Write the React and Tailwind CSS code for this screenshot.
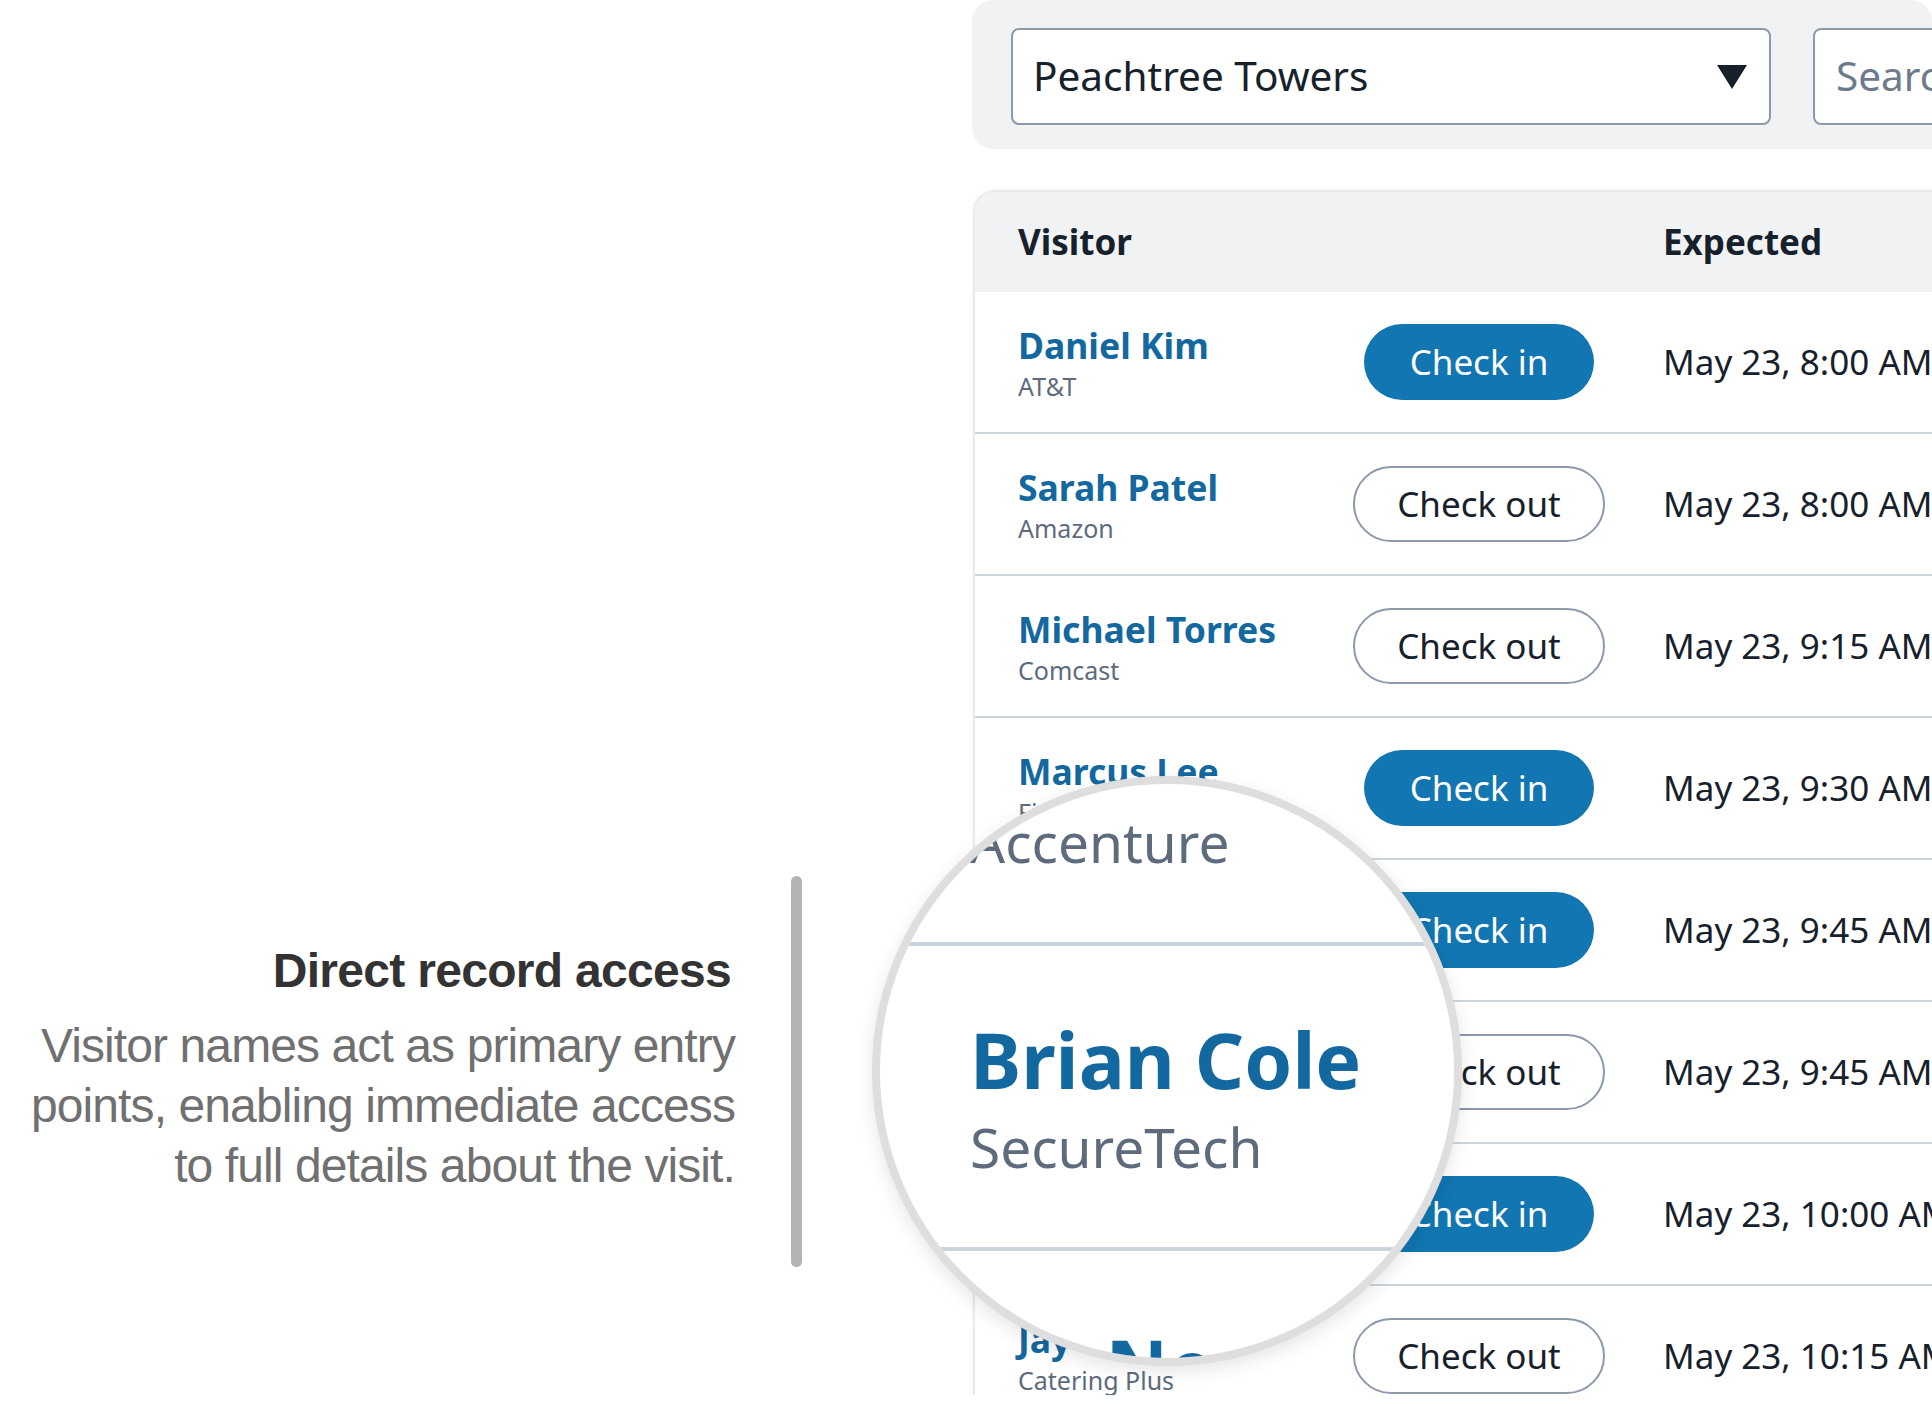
import React from "react";

const rows = [
  { name: "Daniel Kim", company: "AT&T", action: "in", time: "May 23, 8:00 AM" },
  { name: "Sarah Patel", company: "Amazon", action: "out", time: "May 23, 8:00 AM" },
  { name: "Michael Torres", company: "Comcast", action: "out", time: "May 23, 9:15 AM" },
  { name: "Marcus Lee", company: "Fidelity", action: "in", time: "May 23, 9:30 AM" },
  { name: "Olivia Chen", company: "Deloitte", action: "in", time: "May 23, 9:45 AM" },
  { name: "Priya Shah", company: "Accenture", action: "out", time: "May 23, 9:45 AM" },
  { name: "Brian Cole", company: "SecureTech", action: "in", time: "May 23, 10:00 AM" },
  { name: "Jay Novak", company: "Catering Plus", action: "out", time: "May 23, 10:15 AM" },
];

const noto = { fontFamily: '"Noto Sans", "Open Sans", sans-serif' };
const lib = { fontFamily: '"Liberation Sans", Arial, sans-serif' };

function ActionButton({ action }) {
  if (action === "in") {
    return (
      <div className="flex h-[76px] w-[230px] items-center justify-center rounded-full bg-[#1176b1] text-[35px] text-white">
        Check in
      </div>
    );
  }
  return (
    <div className="flex h-[76px] w-[252px] items-center justify-center rounded-full border-2 border-[#8d9aab] bg-white text-[35px] text-[#17212b]">
      Check out
    </div>
  );
}

function Row({ r }) {
  return (
    <div className="flex h-[142px] shrink-0 items-center border-b-2 border-[#cdd5dd] pl-[43px]">
      <div className="w-[301px] shrink-0">
        <div className="whitespace-nowrap text-[35.5px] font-bold leading-[44px] text-[#13689f]">{r.name}</div>
        <div className="mt-[3px] whitespace-nowrap text-[25px] leading-[32px] text-[#5d6b7c]">{r.company}</div>
      </div>
      <div className="flex w-[320px] shrink-0 justify-center">
        <ActionButton action={r.action} />
      </div>
      <div className="ml-[24px] whitespace-nowrap text-[35px] text-[#17212b]">{r.time}</div>
    </div>
  );
}

function MagRow({ r, hideName, last }) {
  return (
    <div
      className={
        "flex h-[305px] flex-col justify-center pl-[110px] " +
        (last ? "" : "border-b-[4px] border-[#cbd3dc]")
      }
    >
      <div
        className={
          "whitespace-nowrap text-[77px] font-bold leading-[95px] text-[#13689f] " +
          (hideName ? "invisible" : "")
        }
      >
        {r.name}
      </div>
      <div className="mt-[5px] whitespace-nowrap text-[55px] leading-[69px] text-[#5d6b7c]">{r.company}</div>
    </div>
  );
}

export default function App() {
  return (
    <div className="relative flex h-[1404px] w-[1932px] overflow-hidden bg-white">
      {/* Left annotation */}
      <div className="flex w-[972px] shrink-0 items-start justify-end pr-[170px] pt-[876px]" style={lib}>
        <div className="flex items-center gap-[56px]">
          <div className="mb-[6px] text-right">
            <div className="whitespace-nowrap pr-[4px] text-[48px] font-bold leading-[60px] tracking-[-0.7px] text-[#333333]">
              Direct record access
            </div>
            <div className="mt-[15px] text-[48px] leading-[60px] tracking-[-0.9px] text-[#707070]">
              <div className="whitespace-nowrap">Visitor names act as primary entry</div>
              <div className="whitespace-nowrap">points, enabling immediate access</div>
              <div className="whitespace-nowrap">to full details about the visit.</div>
            </div>
          </div>
          <div className="h-[391px] w-[11px] rounded-full bg-[#b3b3b3]" />
        </div>
      </div>

      {/* App preview */}
      <div className="flex h-[1395px] w-[960px] shrink-0 flex-col overflow-hidden" style={noto}>
        <div className="flex h-[149px] shrink-0 items-start overflow-hidden rounded-[22px] rounded-br-none bg-[#f1f2f4] pl-[39px] pt-[28px]">
          <div className="flex h-[97px] w-[760px] shrink-0 items-center justify-between rounded-[8px] border-2 border-[#8d9aab] bg-white pl-[20px] pr-[22px]">
            <span className="whitespace-nowrap text-[40.5px] text-[#17212b]">Peachtree Towers</span>
            <svg width="30" height="24" viewBox="0 0 30 24">
              <polygon points="0,0 30,0 15,24" fill="#17212b" />
            </svg>
          </div>
          <div className="ml-[42px] flex h-[97px] w-[400px] shrink-0 items-center rounded-[8px] border-2 border-[#8d9aab] bg-white pl-[21px]">
            <span className="whitespace-nowrap text-[40.5px] text-[#6b7b8c]">Search visitors</span>
          </div>
        </div>

        <div className="ml-px mt-[41px] flex flex-col rounded-tl-[22px] border-l-2 border-t-2 border-[#e9eaec] shadow-[0_0_6px_rgba(0,0,0,0.05)]">
          <div className="flex h-[100px] shrink-0 items-center rounded-tl-[20px] bg-[#f1f2f4] pl-[43px]">
            <div className="w-[301px] shrink-0 text-[35px] font-bold text-[#17212b]">Visitor</div>
            <div className="w-[320px] shrink-0" />
            <div className="ml-[24px] text-[35px] font-bold text-[#17212b]">Expected</div>
          </div>
          {rows.map((r) => (
            <Row key={r.name} r={r} />
          ))}
        </div>
      </div>

      {/* Magnifier */}
      <div
        className="absolute left-[872px] top-[776px] h-[590px] w-[590px] overflow-hidden rounded-full border-[8px] border-[#dedede] bg-white shadow-[0_6px_18px_rgba(0,0,0,0.10)]"
        style={noto}
      >
        <div className="absolute left-[-20px] top-[-143px] w-[700px]">
          <MagRow r={rows[5]} hideName />
          <MagRow r={rows[6]} />
          <MagRow r={rows[7]} last />
        </div>
      </div>
    </div>
  );
}
